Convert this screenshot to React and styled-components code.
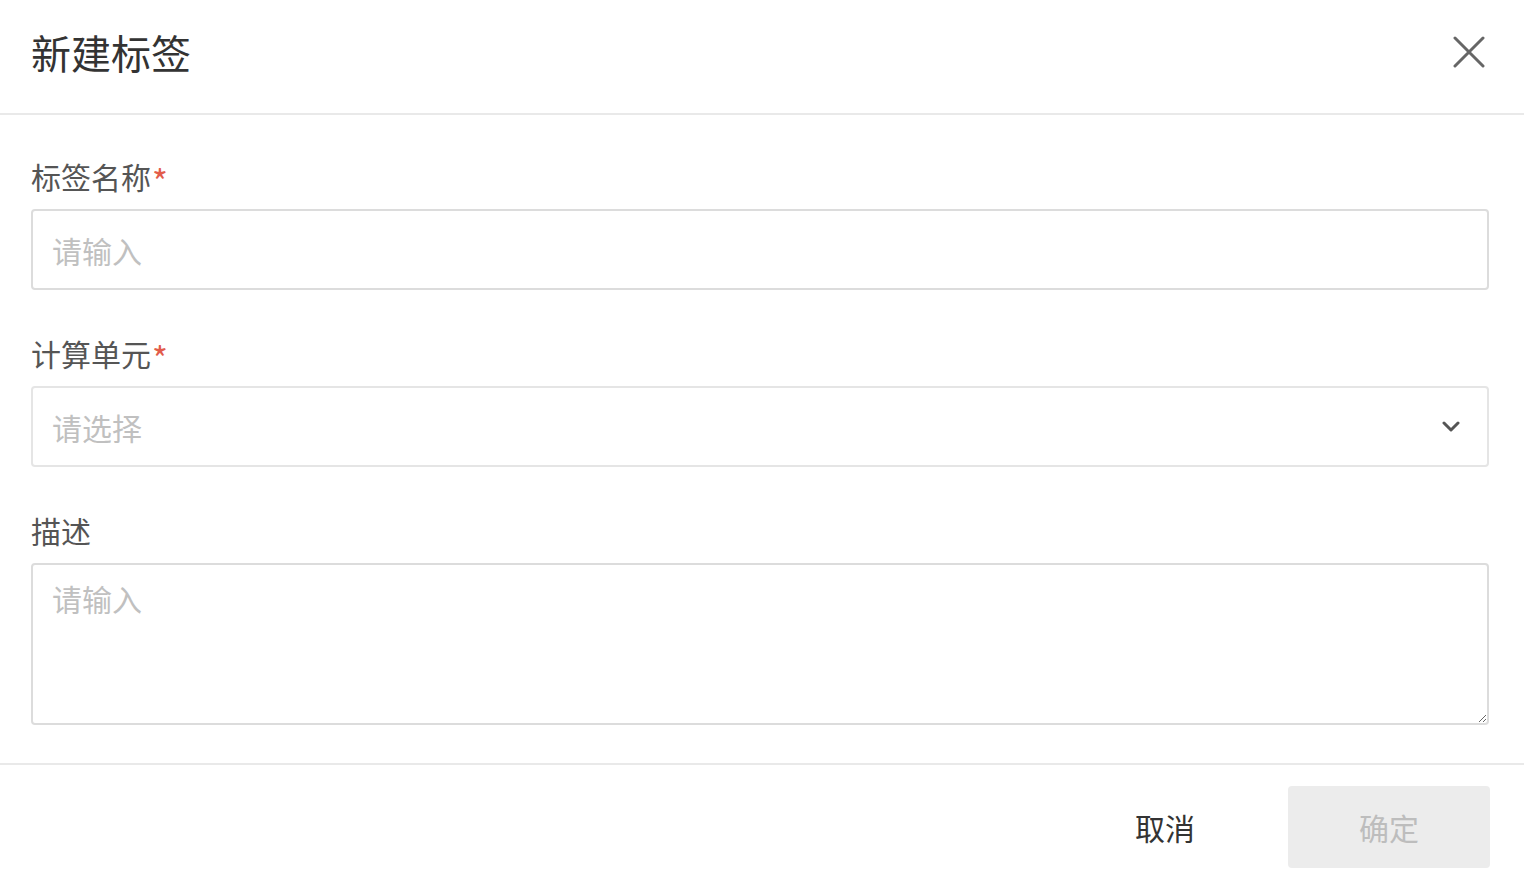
import React from "react";
import styled, { createGlobalStyle } from "styled-components";

const Global = createGlobalStyle`
  html, body { margin: 0; padding: 0; background: #fff; }
  body { font-family: "Noto Sans CJK SC", "Noto Sans", "Liberation Sans", sans-serif; }
  * { box-sizing: border-box; }
`;

const Modal = styled.div`
  width: 1524px;
  height: 872px;
  display: flex;
  flex-direction: column;
  background: #fff;
`;

const Header = styled.div`
  height: 115px;
  flex-shrink: 0;
  display: flex;
  align-items: center;
  justify-content: space-between;
  padding: 0 39px 10px 31px;
  border-bottom: 2px solid #e9e9e9;
`;

const Title = styled.h1`
  margin: 0;
  font-size: 40px;
  font-weight: 400;
  color: #333;
  line-height: 1.4;
`;

const CloseButton = styled.button`
  width: 32px;
  height: 32px;
  padding: 0;
  border: none;
  background: none;
  display: flex;
  align-items: center;
  justify-content: center;
  cursor: pointer;
`;

const Body = styled.div`
  flex: 1;
  padding: 38px 35px 0 31px;
`;

const FormItem = styled.div`
  margin-bottom: ${(p) => (p.$mb === undefined ? 40 : p.$mb)}px;
`;

const Label = styled.label`
  display: block;
  height: 46px;
  margin-bottom: 10px;
  font-size: 30px;
  line-height: 46px;
  color: #555;
`;

const Required = styled.span`
  color: #e25c4b;
  font-size: 34px;
  margin-left: 1px;
  vertical-align: -6px;
  line-height: 0;
`;

const fieldBase = `
  width: 100%;
  border: 2px solid #dcdcdc;
  border-radius: 4px;
  background: #fff;
  font-family: "Noto Sans CJK SC", "Noto Sans", sans-serif;
  font-size: 30px;
  color: #333;
  outline: none;
  &::placeholder { color: #c0c0c0; }
`;

const Input = styled.input`
  ${fieldBase}
  height: 81px;
  padding: 0 19px;
`;

const Select = styled.div`
  ${fieldBase}
  height: 81px;
  padding: 0 27px 0 19px;
  border-color: #e5e5e5;
  display: flex;
  align-items: center;
  justify-content: space-between;
`;

const Placeholder = styled.span`
  color: #c0c0c0;
  font-size: 30px;
`;

const TextArea = styled.textarea`
  ${fieldBase}
  display: block;
  height: 162px;
  padding: 12px 19px;
  resize: vertical;
  line-height: 1.4;
`;

const Footer = styled.div`
  flex-shrink: 0;
  height: 109px;
  border-top: 2px solid #e9e9e9;
  display: flex;
  justify-content: flex-end;
  align-items: flex-start;
  gap: 22px;
  padding: 21px 34px 0 0;
`;

const Button = styled.button`
  width: 202px;
  height: 82px;
  border: none;
  border-radius: 4px;
  font-family: "Noto Sans CJK SC", "Noto Sans", sans-serif;
  font-size: 30px;
  background: ${(p) => (p.$primary ? "#ececec" : "transparent")};
  color: ${(p) => (p.$primary ? "#bdbdbd" : "#333")};
  cursor: pointer;
`;

export default function App() {
  return (
    <>
      <Global />
      <Modal>
        <Header>
          <Title>新建标签</Title>
          <CloseButton aria-label="close">
            <svg width="32" height="32" viewBox="0 0 32 32">
              <path d="M2 2 L30 30 M30 2 L2 30" stroke="#666" strokeWidth="3" strokeLinecap="round" fill="none" />
            </svg>
          </CloseButton>
        </Header>
        <Body>
          <FormItem>
            <Label>标签名称<Required>*</Required></Label>
            <Input placeholder="请输入" />
          </FormItem>
          <FormItem>
            <Label>计算单元<Required>*</Required></Label>
            <Select>
              <Placeholder>请选择</Placeholder>
              <svg width="18" height="12" viewBox="0 0 18 12">
                <path d="M2 2 L9 9 L16 2" stroke="#555" strokeWidth="3" fill="none" strokeLinecap="round" strokeLinejoin="round" />
              </svg>
            </Select>
          </FormItem>
          <FormItem $mb={0}>
            <Label>描述</Label>
            <TextArea placeholder="请输入" />
          </FormItem>
        </Body>
        <Footer>
          <Button>取消</Button>
          <Button $primary>确定</Button>
        </Footer>
      </Modal>
    </>
  );
}
